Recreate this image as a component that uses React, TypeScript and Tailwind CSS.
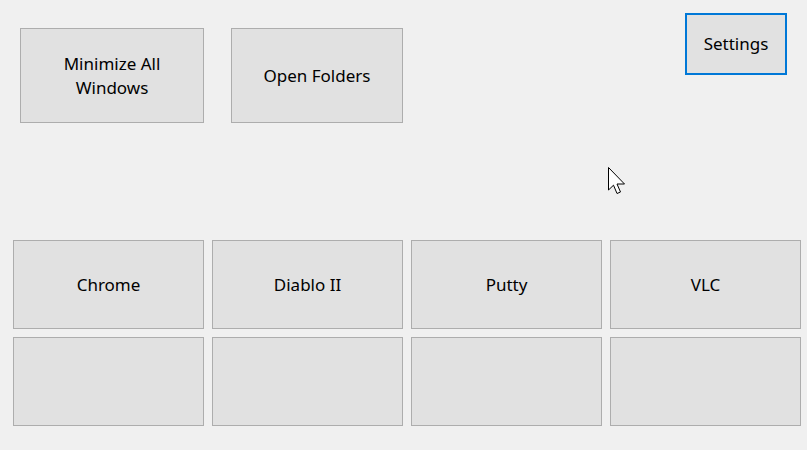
import React from 'react';

const font = { fontFamily: '"Noto Sans", "Open Sans", sans-serif' };

function WinButton({ label, className = '' }: { label?: string; className?: string }) {
  return (
    <button
      className={`flex items-center justify-center bg-[#e1e1e1] border border-[#adadad] text-black text-[17px] leading-[24px] text-center ${className}`}
    >
      {label}
    </button>
  );
}

const apps = ['Chrome', 'Diablo II', 'Putty', 'VLC', '', '', '', ''];

export default function App() {
  return (
    <div className="relative w-[807px] h-[450px] bg-[#f0f0f0] overflow-hidden" style={font}>
      {/* top toolbar */}
      <div className="flex items-start pt-[13px] pl-[20px] pr-[20px]">
        <WinButton label="Minimize All Windows" className="mt-[15px] w-[184px] h-[95px] px-[30px]" />
        <WinButton label="Open Folders" className="mt-[15px] ml-[27px] w-[172px] h-[95px]" />
        <button className="ml-auto w-[102px] h-[62px] bg-[#e1e1e1] border-2 border-[#0078d7] text-black text-[17px]">
          Settings
        </button>
      </div>

      {/* launcher grid */}
      <div className="mt-[117px] ml-[13px] grid grid-cols-[repeat(4,191px)] auto-rows-[89px] gap-[8px]">
        {apps.map((a, i) => (
          <WinButton key={i} label={a} />
        ))}
      </div>

      {/* mouse pointer */}
      <svg className="absolute left-[608px] top-[167px]" width="19" height="28" viewBox="0 0 19 28">
        <path
          d="M0.5 0.5 L0.5 23 L5.5 18.2 L9 26.5 L12.5 25 L9 17 L16.5 17 Z"
          fill="#fff"
          stroke="#000"
          strokeWidth="1"
          strokeLinejoin="miter"
        />
      </svg>
    </div>
  );
}
